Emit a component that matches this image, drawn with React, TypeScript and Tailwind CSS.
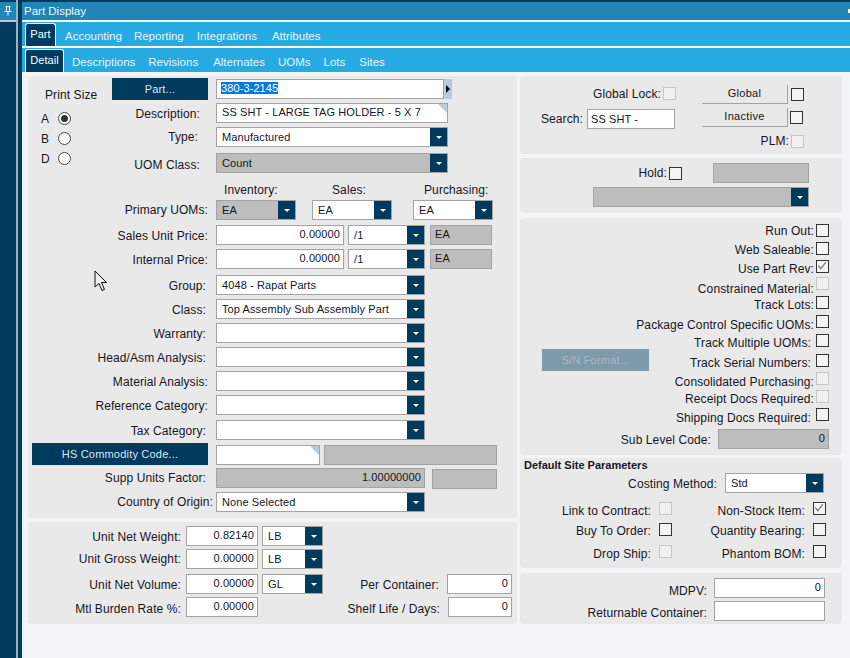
import React from 'react';

const Select = ({ value, className = '', gray = false }: { value?: string; className?: string; gray?: boolean }) => (
  <div className={`flex h-[20px] border border-[#a3a3a3] text-[11px] ${gray ? 'bg-[#bdbdbd]' : 'bg-white'} ${className}`}>
    <div className="flex-1 pl-[5px] leading-[18px] truncate">{value}</div>
    <div className="w-[17px] bg-[#003a5d] flex items-center justify-center">
      <div className="w-0 h-0 border-x-[3px] border-x-transparent border-t-[3px] border-t-white" />
    </div>
  </div>
);

const Input = ({ value, className = '', right = false, corner = false, tight = false }: { value?: string; className?: string; right?: boolean; corner?: boolean; tight?: boolean }) => (
  <div className={`relative h-[20px] border border-[#a3a3a3] bg-white text-[11px] ${tight ? 'leading-[19px]' : 'leading-[16px]'} ${right ? 'text-right pr-[3px]' : tight ? 'pl-[3px]' : 'pl-[5px]'} ${className}`}>
    {value}
    {corner && (
      <div className="absolute top-0 right-0 w-0 h-0 border-l-[9px] border-l-transparent border-t-[9px] border-t-[#b8c9e0]" />
    )}
  </div>
);

const Gray = ({ value, className = '', right = false }: { value?: string; className?: string; right?: boolean }) => (
  <div className={`h-[20px] border border-[#a3a3a3] bg-[#bdbdbd] text-[11px] leading-[17px] ${right ? 'text-right pr-[3px]' : 'pl-[4px]'} ${className}`}>{value}</div>
);

const Check = ({ checked = false, disabled = false, className = '' }: { checked?: boolean; disabled?: boolean; className?: string }) => (
  <div className={`w-[13px] h-[13px] shrink-0 border ${disabled ? 'border-[#c6c6c6] bg-[#f0f0f0]' : 'border-[#333] bg-[#f4f4f4]'} ${className}`}>
    {checked && (
      <svg viewBox="0 0 13 13" className="w-[11px] h-[11px]">
        <path d="M1.5 5.5 L4.5 9 L10.5 1.5" fill="none" stroke="#666" strokeWidth="1.3" />
      </svg>
    )}
  </div>
);

const Row = ({ label, labelClass = 'w-[180px] mr-[8px]', drop = 'pt-[2px]', className = '', children }: { label: string; labelClass?: string; drop?: string; className?: string; children?: React.ReactNode }) => (
  <div className={`flex items-center h-[20px] ${className}`}>
    <div className={`text-right whitespace-nowrap shrink-0 ${drop} ${labelClass}`}>{label}</div>
    {children}
  </div>
);

const Radio = ({ label, on = false, className = '' }: { label: string; on?: boolean; className?: string }) => (
  <div className={`flex items-center h-[13px] ${className}`}>
    <span className="w-[30px] pl-[13px]">{label}</span>
    <div className="w-[13px] h-[13px] rounded-full border border-[#444] bg-white flex items-center justify-center">
      {on && <div className="w-[7px] h-[7px] rounded-full bg-[#333]" />}
    </div>
  </div>
);

const CheckRow = ({ label, checked, disabled, className = '', gap = 'mr-[2px]' }: { label: string; checked?: boolean; disabled?: boolean; className?: string; gap?: string }) => (
  <div className={`flex items-center justify-end h-[13px] ${className}`}>
    <span className={`whitespace-nowrap ${gap}`}>{label}</span>
    <Check checked={checked} disabled={disabled} />
  </div>
);

const Tab = ({ label, active = false, className = '' }: { label: string; active?: boolean; className?: string }) =>
  active ? (
    <div className={`h-[23px] mt-[1px] bg-[#003a5d] text-white text-[11px] text-center border border-b-0 border-white rounded-t-[3px] leading-[21px] ${className}`}>{label}</div>
  ) : (
    <div className={`text-[#e6f5fc] text-[11.5px] tracking-normal leading-[24px] pt-[2px] ${className}`}>{label}</div>
  );

export default function App() {
  return (
    <div className="relative w-[850px] h-[658px] overflow-hidden flex bg-[#f3f4f6] text-[12px] leading-[14px] tracking-[0.1px] text-[#16161f] font-['Liberation_Sans',Arial,sans-serif]">
      {/* side rail */}
      <div className="w-[16px] flex flex-col bg-[#003a5d]">
        <div className="h-[2px] bg-[#003a5d]" />
        <div className="h-[20px] bg-[#2086b8] border-b-2 border-[#c4c4c4] flex items-center justify-center">
          <svg viewBox="0 0 8 10" className="w-[8px] h-[10px]">
            <path d="M1.5 0.5h5M2.5 0.5v5M5.5 0.5v5M0.5 5.5h7M4 5.5v4" fill="none" stroke="#fff" strokeWidth="1" />
          </svg>
        </div>
      </div>
      <div className="w-[2px] bg-[#9fb1bd]" />
      <div className="w-[4px] bg-[#003a5d]" />

      <div className="flex-1 flex flex-col min-w-0">
        <div className="h-[2px] bg-[#003a5d]" />
        <div className="relative h-[18px] bg-[#2086b8] text-[#eef7fb] text-[11.5px] tracking-normal pl-[2px] leading-[18px]">
          Part Display
          <div className="absolute right-0 top-[7px] w-[2px] h-[4px] bg-white" />
        </div>
        <div className="h-[2px] bg-white" />
        <div className="h-[24px] bg-[#27a9e2] flex pl-[3px]">
          <Tab label="Part" active className="w-[31px]" />
          <Tab label="Accounting" className="ml-[9px]" />
          <Tab label="Reporting" className="ml-[12px]" />
          <Tab label="Integrations" className="ml-[13px]" />
          <Tab label="Attributes" className="ml-[15px]" />
        </div>
        <div className="h-[2px] bg-white" />
        <div className="h-[24px] bg-[#27a9e2] flex pl-[3px]">
          <Tab label="Detail" active className="w-[39px]" />
          <Tab label="Descriptions" className="ml-[8px]" />
          <Tab label="Revisions" className="ml-[13px]" />
          <Tab label="Alternates" className="ml-[15px]" />
          <Tab label="UOMs" className="ml-[13px]" />
          <Tab label="Lots" className="ml-[13px]" />
          <Tab label="Sites" className="ml-[14px]" />
        </div>

        <div className="flex pl-[6px] pt-[4px]">
          {/* left column */}
          <div className="w-[489px] mr-[3px]">
            <div className="h-[442px] bg-[#e9e9e9] rounded-[4px]">
              <div className="flex">
                <div className="w-[84px] pt-[11px]">
                  <div className="pl-[17px] h-[16px] leading-[16px]">Print Size</div>
                  <Radio label="A" on className="mt-[9px]" />
                  <Radio label="B" className="mt-[7px]" />
                  <Radio label="D" className="mt-[7px]" />
                </div>
                <div className="pt-[2px]">
                  <div className="flex">
                    <div className="w-[96px] h-[22px] bg-[#003a5d] text-[#dfe7ec] text-[11px] tracking-[0.2px] text-center leading-[22px]">Part...</div>
                    <div className="ml-[8px] w-[228px] h-[20px] mt-[1px] border border-[#a3a3a3] bg-white text-[11px] pl-[4px] leading-[17px]">
                      <span className="bg-[#0a78d7] text-white">380-3-2145</span>
                    </div>
                    <div className="w-[8px] h-[20px] mt-[1px] bg-[#b8c9e0] flex items-center justify-center">
                      <div className="w-0 h-0 border-y-[4px] border-y-transparent border-l-[4px] border-l-black" />
                    </div>
                  </div>
                  <Row label="Description:" labelClass="w-[88px] mr-[16px]" className="mt-[3px]">
                    <Input value="SS SHT - LARGE TAG HOLDER - 5 X 7" corner className="w-[232px]" />
                  </Row>
                  <Row label="Type:" labelClass="w-[86px] mr-[18px]" drop="" className="mt-[4px]">
                    <Select value="Manufactured" className="w-[232px]" />
                  </Row>
                  <Row label="UOM Class:" labelClass="w-[88px] mr-[16px]" drop="pt-[4px]" className="mt-[6px]">
                    <Select value="Count" gray className="w-[232px]" />
                  </Row>
                </div>
              </div>

              <div className="flex pl-[196px] mt-[9px] h-[16px] leading-[16px]">
                <div className="w-[108px]">Inventory:</div>
                <div className="w-[92px]">Sales:</div>
                <div>Purchasing:</div>
              </div>
              <Row label="Primary UOMs:" drop="" className="mt-[2px]">
                <Select value="EA" gray className="w-[80px]" />
                <Select value="EA" className="w-[80px] ml-[16px]" />
                <Select value="EA" className="w-[80px] ml-[21px]" />
              </Row>
              <Row label="Sales Unit Price:" className="mt-[5px]">
                <Input value="0.00000" right className="w-[128px]" />
                <Select value="/1" className="w-[77px] ml-[4px]" />
                <Gray value="EA" className="w-[62px] ml-[5px]" />
              </Row>
              <Row label="Internal Price:" className="mt-[4px]">
                <Input value="0.00000" right className="w-[128px]" />
                <Select value="/1" className="w-[77px] ml-[4px]" />
                <Gray value="EA" className="w-[62px] ml-[5px]" />
              </Row>
              <Row label="Group:" labelClass="w-[178px] mr-[10px]" className="mt-[6px]">
                <Select value="4048 - Rapat Parts" className="w-[209px]" />
              </Row>
              <Row label="Class:" labelClass="w-[178px] mr-[10px]" className="mt-[4px]">
                <Select value="Top Assembly Sub Assembly Part" className="w-[209px]" />
              </Row>
              <Row label="Warranty:" labelClass="w-[178px] mr-[10px]" className="mt-[4px]">
                <Select className="w-[209px]" />
              </Row>
              <Row label="Head/Asm Analysis:" labelClass="w-[178px] mr-[10px]" className="mt-[4px]">
                <Select className="w-[209px]" />
              </Row>
              <Row label="Material Analysis:" className="mt-[4px]">
                <Select className="w-[209px]" />
              </Row>
              <Row label="Reference Category:" className="mt-[4px]">
                <Select className="w-[209px]" />
              </Row>
              <Row label="Tax Category:" labelClass="w-[178px] mr-[10px]" className="mt-[5px]">
                <Select className="w-[209px]" />
              </Row>
              <div className="flex pl-[4px] mt-[3px]">
                <div className="w-[176px] h-[22px] bg-[#003a5d] text-[#dfe7ec] text-[11px] tracking-[0.2px] text-center leading-[22px]">HS Commodity Code...</div>
                <Input corner className="w-[104px] ml-[8px] mt-[2px]" />
                <Gray className="w-[173px] ml-[4px] mt-[2px]" />
              </div>
              <Row label="Supp Units Factor:" labelClass="w-[178px] mr-[10px]" drop="" className="mt-[3px]">
                <Gray value="1.00000000" right className="w-[209px]" />
                <Gray className="w-[65px] ml-[7px] self-start mt-[1px]" />
              </Row>
              <Row label="Country of Origin:" labelClass="w-[185px] mr-[3px]" drop="" className="mt-[4px]">
                <Select value="None Selected" className="w-[209px]" />
              </Row>
            </div>

            <div className="h-[102px] mt-[4px] bg-[#e9e9e9] rounded-[4px] pt-[4px]">
              <Row label="Unit Net Weight:" labelClass="w-[153px] mr-[5px]">
                <Input value="0.82140" right className="w-[72px]" />
                <Select value="LB" className="w-[61px] ml-[4px]" />
              </Row>
              <Row label="Unit Gross Weight:" labelClass="w-[153px] mr-[5px]" drop="" className="mt-[3px]">
                <Input value="0.00000" right className="w-[72px]" />
                <Select value="LB" className="w-[61px] ml-[4px]" />
              </Row>
              <div className="flex items-center mt-[5px]">
                <Row label="Unit Net Volume:" labelClass="w-[153px] mr-[5px]">
                  <Input value="0.00000" right className="w-[72px]" />
                  <Select value="GL" className="w-[61px] ml-[4px]" />
                </Row>
                <Row label="Per Container:" labelClass="w-[116px] mr-[8px]">
                  <Input value="0" right className="w-[65px]" />
                </Row>
              </div>
              <div className="flex items-center mt-[3px]">
                <Row label="Mtl Burden Rate %:" labelClass="w-[153px] mr-[5px]" drop="pt-[4px]">
                  <Input value="0.00000" right className="w-[72px]" />
                </Row>
                <Row label="Shelf Life / Days:" labelClass="w-[182px] mr-[8px]" drop="pt-[4px]">
                  <Input value="0" right className="w-[64px]" />
                </Row>
              </div>
            </div>
          </div>

          {/* right column */}
          <div className="w-[322px]">
            <div className="h-[78px] bg-[#e9e9e9] rounded-[4px] flex">
              <div className="w-[182px]">
                <CheckRow label="Global Lock:" disabled className="mt-[11px] pr-[26px]" />
                <div className="flex items-center justify-end mt-[9px] pr-[27px]">
                  <span className="mr-[4px]">Search:</span>
                  <Input value="SS SHT -" tight className="w-[88px]" />
                </div>
              </div>
              <div className="pt-[9px]">
                <div className="flex items-center">
                  <div className="w-[86px] h-[19px] border-b border-r border-[#a3a3a3] text-[11px] tracking-[0.3px] text-center leading-[17px]">Global</div>
                  <Check className="ml-[3px]" />
                </div>
                <div className="flex items-center mt-[4px]">
                  <div className="w-[86px] h-[19px] border-b border-r border-[#a3a3a3] text-[11px] tracking-[0.3px] text-center leading-[17px]">Inactive</div>
                  <Check className="ml-[2px]" />
                </div>
                <div className="flex items-center justify-end mt-[7px]">
                  <span className="mr-[2px]">PLM:</span>
                  <Check disabled />
                </div>
              </div>
            </div>

            <div className="h-[55px] mt-[4px] bg-[#e9e9e9] rounded-[4px] pl-[73px] pt-[5px]">
              <div className="flex items-center">
                <span className="w-[74px] text-right mr-[2px]">Hold:</span>
                <Check />
                <Gray className="w-[96px] ml-[31px]" />
              </div>
              <Select gray className="w-[216px] mt-[4px]" />
            </div>

            <div className="h-[237px] mt-[5px] bg-[#e9e9e9] rounded-[4px] flex">
              <div className="w-[129px] pl-[22px] pt-[131px]">
                <div className="w-[107px] h-[22px] bg-[#7f9aaa] text-[#a9b9c4] text-[11px] tracking-[0.2px] text-center leading-[22px]">S/N Format...</div>
              </div>
              <div className="w-[180px] pt-[6px]">
                <CheckRow label="Run Out:" />
                <CheckRow label="Web Saleable:" gap="mr-[2px] mt-[3px]" className="mt-[5px]" />
                <CheckRow label="Use Part Rev:" checked gap="mr-[2px] mt-[4px]" className="mt-[5px]" />
                <CheckRow label="Constrained Material:" disabled gap="mr-[2px] mt-[10px]" className="mt-[4px]" />
                <CheckRow label="Track Lots:" gap="mr-[2px] mt-[4px]" className="mt-[6px]" />
                <CheckRow label="Package Control Specific UOMs:" gap="mr-[2px] mt-[6px]" className="mt-[6px]" />
                <CheckRow label="Track Multiple UOMs:" gap="mr-[5px] mt-[4px]" className="mt-[6px]" />
                <CheckRow label="Track Serial Numbers:" gap="mr-[5px] mt-[4px]" className="mt-[7px]" />
                <CheckRow label="Consolidated Purchasing:" disabled gap="mr-[2px] mt-[6px]" className="mt-[5px]" />
                <CheckRow label="Receipt Docs Required:" disabled gap="mr-[2px] mt-[4px]" className="mt-[5px]" />
                <CheckRow label="Shipping Docs Required:" gap="mr-[5px] mt-[6px]" className="mt-[5px]" />
                <div className="flex items-center justify-end mt-[8px]">
                  <span className="mr-[7px] mt-[2px] whitespace-nowrap shrink-0">Sub Level Code:</span>
                  <Gray value="0" right className="w-[111px] shrink-0" />
                </div>
              </div>
            </div>

            <div className="h-[110px] mt-[3px] bg-[#e9e9e9] rounded-[4px] pt-[1px]">
              <div className="pl-[4px] h-[13px] leading-[13px] text-[11px] tracking-normal font-bold">Default Site Parameters</div>
              <div className="flex items-center justify-end pr-[18px] mt-[1px]">
                <span className="mr-[8px] mt-[2px]">Costing Method:</span>
                <Select value="Std" className="w-[99px]" />
              </div>
              <div className="grid grid-cols-[152px_154px] mt-[9px]">
                <CheckRow label="Link to Contract:" disabled gap="mr-[8px] mt-[5px]" />
                <CheckRow label="Non-Stock Item:" checked gap="mr-[8px] mt-[5px]" />
                <CheckRow label="Buy To Order:" gap="mr-[8px] mt-[3px]" className="mt-[8px]" />
                <CheckRow label="Quantity Bearing:" gap="mr-[8px] mt-[3px]" className="mt-[8px]" />
                <CheckRow label="Drop Ship:" disabled gap="mr-[8px] mt-[4px]" className="mt-[9px]" />
                <CheckRow label="Phantom BOM:" gap="mr-[8px] mt-[4px]" className="mt-[9px]" />
              </div>
            </div>

            <div className="h-[51px] mt-[5px] bg-[#e9e9e9] rounded-[4px] pt-[5px]">
              <Row label="MDPV:" labelClass="w-[187px] mr-[7px]" drop="pt-[5px]">
                <Input value="0" right className="w-[111px]" />
              </Row>
              <Row label="Returnable Container:" labelClass="w-[187px] mr-[7px]" drop="pt-[3px]" className="mt-[3px]">
                <Input className="w-[111px]" />
              </Row>
            </div>
          </div>
        </div>
      </div>

      {/* mouse pointer */}
      <svg viewBox="0 0 14 22" className="absolute left-[94px] top-[270px] w-[14px] h-[22px]">
        <path d="M1 1 L1 17 L5 13.5 L8 20.5 L10.5 19.5 L7.5 12.5 L12.5 12.5 Z" fill="#eee" stroke="#111" strokeWidth="1" />
      </svg>
    </div>
  );
}
